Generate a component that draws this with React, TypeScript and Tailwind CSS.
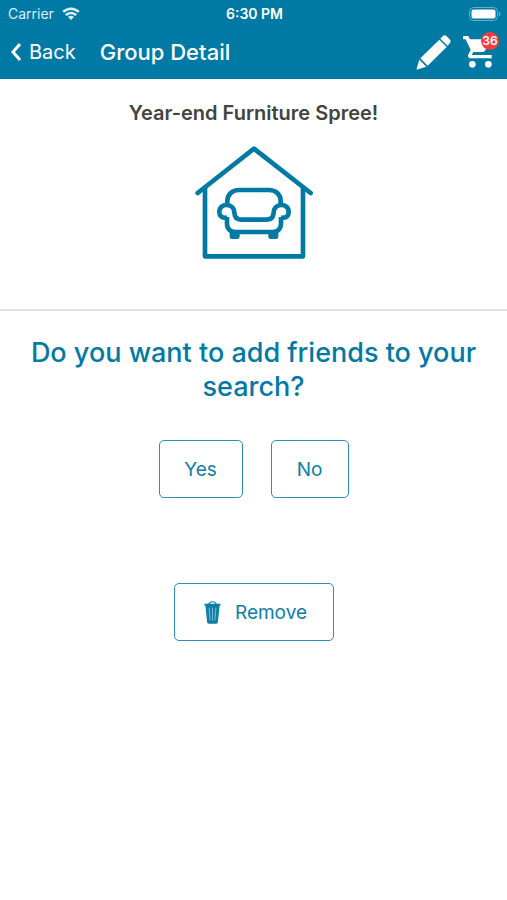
import type { ButtonHTMLAttributes } from "react";
import { clsx } from "clsx";

const CART_COUNT = 36;

function WifiIcon() {
    return (
        <svg viewBox="0 0 54 40" className="w-[18px] h-[13px]" aria-hidden="true">
            <g fill="none" stroke="currentColor" strokeWidth="8">
                <path d="M3 15 C17 2 37 2 51 15" />
                <path d="M11 25 C20 16 34 16 43 25" />
            </g>
            <path d="M18 31 C23 26 31 26 36 31 L27 40 Z" fill="currentColor" />
        </svg>
    );
}

function BatteryIcon() {
    return (
        <svg viewBox="0 0 32 14" className="w-8 h-[14px]" aria-hidden="true">
            <rect x="0.5" y="0.5" width="28" height="13" rx="4" fill="none" stroke="#66aeca" />
            <rect x="2.5" y="2.5" width="24" height="9" rx="2" fill="#fff" />
            <path d="M30 4.5 C32 5.5 32 8.5 30 9.5 Z" fill="#66aeca" />
        </svg>
    );
}

function PencilIcon() {
    return (
        <svg viewBox="0 0 105 105" className="w-[35px] h-[35px]" fill="currentColor" aria-hidden="true">
            <path d="M80 4 Q86 -2 92 4 L101 13 Q107 19 101 25 L95 32 L73 11 Z" />
            <path d="M70 14 L92 36 L35 92 L13 70 Z" />
            <path d="M10 74 L31 95 L1 104 Z" />
        </svg>
    );
}

function CartIcon() {
    return (
        <svg viewBox="0 0 90 96" className="w-[30px] h-8" fill="currentColor" aria-hidden="true">
            <path d="M0 0 H16 L21 10 H84 L67 43 Q64 48 59 48 H31 L26 57 H86 V67 H25 C15 67 13 59 17 53 L23 42 L8 10 H0 Z" />
            <circle cx="28" cy="85" r="10" />
            <circle cx="76" cy="85" r="10" />
        </svg>
    );
}

function HouseIcon() {
    return (
        <svg viewBox="45 30 354 342" className="w-[118px] h-[114px]" fill="none" stroke="currentColor" strokeWidth="14" aria-hidden="true">
            <path d="M53 174 L222 41 L392 174" strokeLinecap="round" strokeLinejoin="round" />
            <path d="M75 158 V364 H369 V158" strokeLinejoin="round" />
            <path d="M142 208 V199 C142 178 157 165 177 165 H267 C287 165 302 178 302 199 V208" />
            <path d="M141 248 C125 250 118 242 118 231 C118 218 128 209 141 210 C156 211 163 222 163 233 C164 247 170 254 183 254 H261 C274 254 280 247 281 233 C281 222 288 211 303 210 C316 209 326 218 326 231 C326 242 319 250 303 248" />
            <path d="M141 246 V265 C141 281 150 291 166 291 H278 C294 291 303 281 303 265 V246" />
            <path d="M149 290 H179 V305 Q179 312 172 312 H156 Q149 312 149 305 Z M265 290 H295 V305 Q295 312 288 312 H272 Q265 312 265 305 Z" fill="currentColor" stroke="none" />
        </svg>
    );
}

function TrashIcon() {
    return (
        <svg viewBox="0 0 50 68" className="mb-[3px] w-[17px] h-[23px]" aria-hidden="true">
            <path d="M14 9 Q16 2 25 2 Q34 2 36 9" fill="none" stroke="currentColor" strokeWidth="3" />
            <path d="M1 8 H49 V13 H46 L41 62 Q41 67 36 67 H14 Q9 67 9 62 L4 13 H1 Z" fill="currentColor" />
            <path d="M15 20 L18 58 M25 20 V58 M35 20 L32 58" stroke="#7dbcd2" strokeWidth="3" />
        </svg>
    );
}

function OutlineButton({ className, children, ...props }: ButtonHTMLAttributes<HTMLButtonElement>) {
    return (
        <button
            type="button"
            className={clsx(
                "flex h-[58px] items-center justify-center rounded-[5px] border border-[#2b8fb4] pt-[3px] text-[19px] text-[#0d7ea8]",
                className
            )}
            {...props}
        >
            {children}
        </button>
    );
}

export default function App() {
    return (
        <div className="min-h-screen bg-white font-['Inter','Liberation_Sans',sans-serif]">
            <header className="bg-[#007aa5] text-white">
                <div className="grid h-[27px] grid-cols-3 items-center pl-2 pr-[6px] text-[14px]">
                    <div className="flex items-center gap-2 text-[#d9f0f8]">
                        <span>Carrier</span>
                        <WifiIcon />
                    </div>
                    <div className="text-center font-semibold">6:30 PM</div>
                    <div className="flex justify-end">
                        <BatteryIcon />
                    </div>
                </div>
                <nav className="flex h-[52px] items-center pb-[2px] pl-[11px] pr-[14px]">
                    <button type="button" className="flex items-center gap-2 text-[20px]">
                        <svg viewBox="0 0 10 18" className="w-[10px] h-[18px]" fill="none" stroke="currentColor" strokeWidth="3" aria-hidden="true">
                            <path d="M9 1 L2 9 L9 17" />
                        </svg>
                        Back
                    </button>
                    <h1 className="ml-6 text-[22px] font-medium">Group Detail</h1>
                    <div className="ml-auto flex items-center gap-3">
                        <button type="button" aria-label="Edit group">
                            <PencilIcon />
                        </button>
                        <button type="button" aria-label="Cart" className="relative">
                            <CartIcon />
                            <span className="absolute -right-[6px] -top-1 flex h-[18px] w-[18px] items-center justify-center rounded-full bg-[#f93b40] text-[12px] font-semibold">
                                {CART_COUNT}
                            </span>
                        </button>
                    </div>
                </nav>
            </header>

            <section className="flex flex-col items-center border-b-2 border-[#e4e4e4] pb-[50px] pt-5">
                <h2 className="text-[20px] leading-7 font-semibold text-[#434343]">Year-end Furniture Spree!</h2>
                <div className="mt-[18px] text-[#007aa5]">
                    <HouseIcon />
                </div>
            </section>

            <main className="flex flex-col items-center px-5 pt-[25px]">
                <p className="text-center text-[27px] leading-[34px] font-medium text-[#007aa5]">
                    Do you want to add friends to your search?
                </p>
                <div className="mt-9 flex gap-7">
                    <OutlineButton className="w-[84px]">Yes</OutlineButton>
                    <OutlineButton className="w-[78px]">No</OutlineButton>
                </div>
                <OutlineButton className="mt-[85px] w-40 gap-[14px] pl-1">
                    <TrashIcon />
                    Remove
                </OutlineButton>
            </main>
        </div>
    );
}
